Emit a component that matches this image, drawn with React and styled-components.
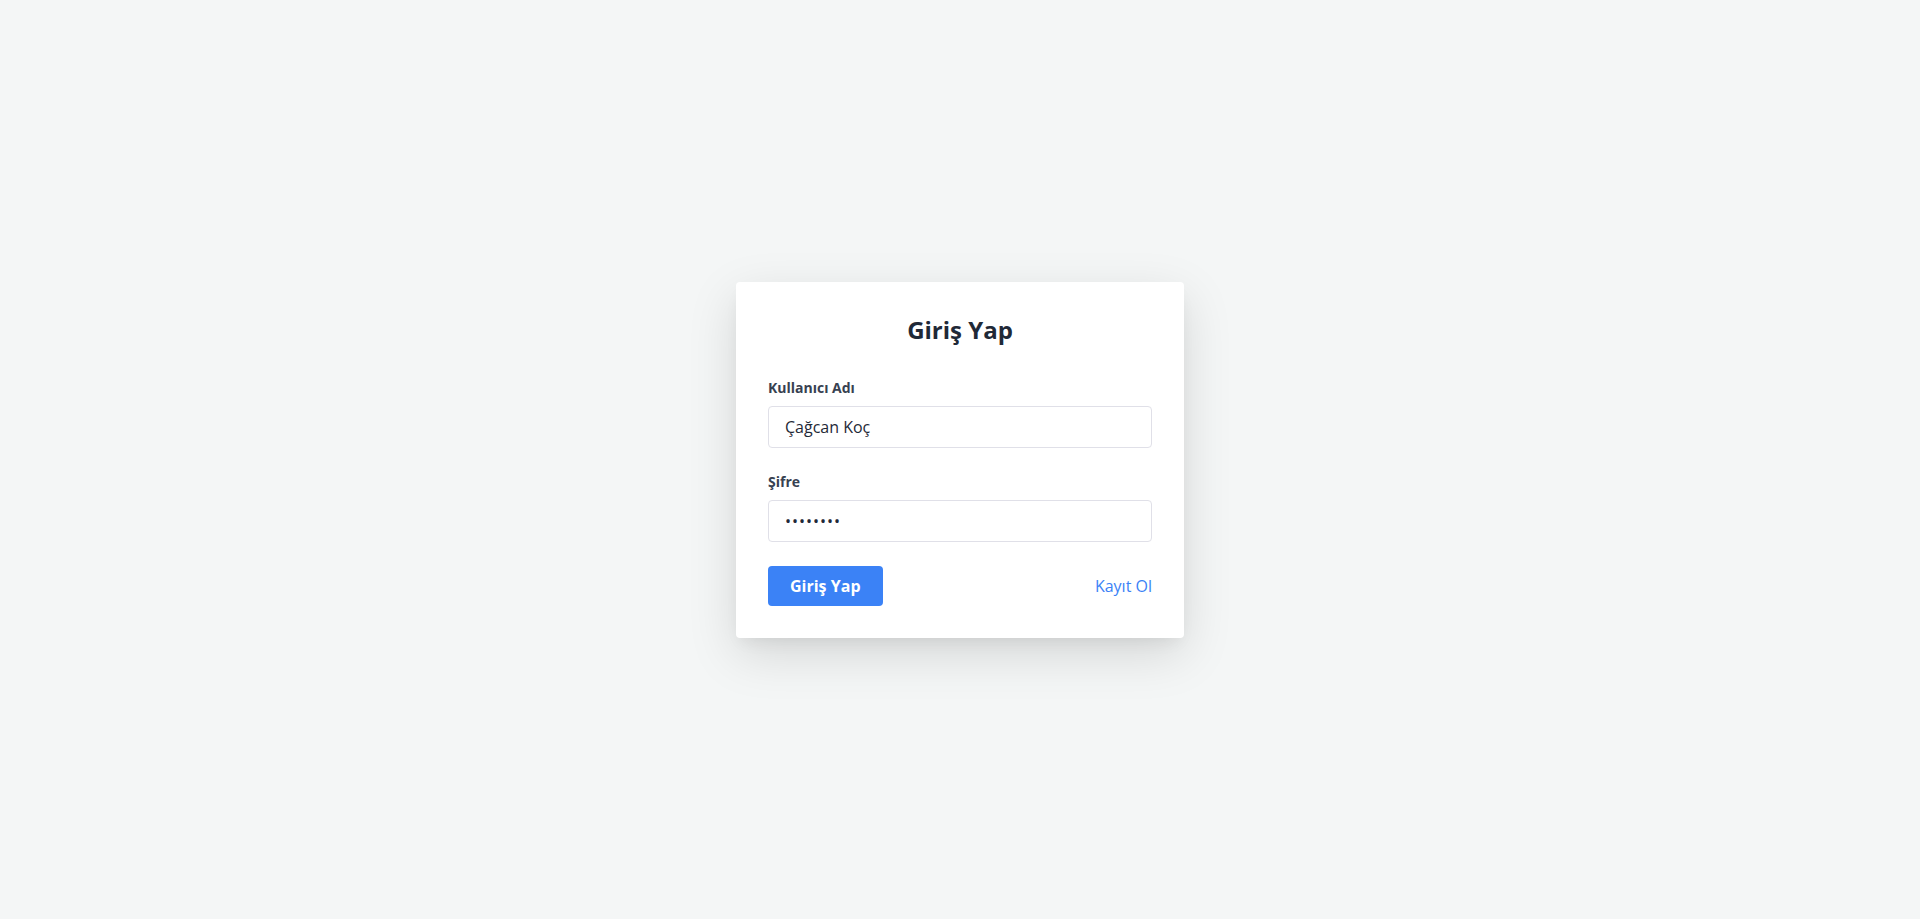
import { useState } from 'react';
import styled, { createGlobalStyle } from 'styled-components';

const GlobalStyle = createGlobalStyle`
  * {
    box-sizing: border-box;
  }
  body {
    margin: 0;
    background: #f4f6f6;
    font-family: "Open Sans", "Noto Sans", sans-serif;
  }
`;

const Screen = styled.div`
  min-height: 100vh;
  display: flex;
  align-items: center;
  justify-content: center;
`;

const Card = styled.form`
  width: 448px;
  padding: 32px;
  background: #ffffff;
  border-radius: 4px;
  box-shadow: 0 16px 50px rgba(0, 0, 0, 0.13), 0 8px 16px -6px rgba(0, 0, 0, 0.08);
`;

const Title = styled.h2`
  margin: 0 0 32px;
  font-size: 24px;
  line-height: 32px;
  font-weight: 700;
  text-align: center;
  color: #1f2937;
`;

const Field = styled.div`
  margin-bottom: 24px;
`;

const Label = styled.label`
  display: block;
  margin-bottom: 8px;
  font-size: 14px;
  line-height: 20px;
  font-weight: 700;
  color: #374151;
`;

const Input = styled.input`
  display: block;
  width: 100%;
  height: 42px;
  padding: 8px 16px;
  font-family: inherit;
  font-size: 16px;
  line-height: 24px;
  color: #1f2937;
  background: #fff;
  border: 1px solid #e0e0e8;
  border-radius: 4px;
  outline: none;
  letter-spacing: ${(p) => (p.type === 'password' ? '1px' : 'normal')};
`;

const Actions = styled.div`
  display: flex;
  align-items: center;
  justify-content: space-between;
`;

const Button = styled.button`
  height: 40px;
  padding: 0 22px;
  font-family: inherit;
  font-size: 16px;
  font-weight: 700;
  color: #fff;
  background: #3b82f6;
  border: none;
  border-radius: 4px;
  cursor: pointer;
`;

const LinkText = styled.a`
  font-size: 16px;
  color: #3b82f6;
  text-decoration: none;
  cursor: pointer;
`;

export default function App() {
  const [user, setUser] = useState('Çağcan Koç');
  const [pass, setPass] = useState('12345678');

  return (
    <>
      <GlobalStyle />
      <Screen>
        <Card onSubmit={(e) => e.preventDefault()}>
          <Title>Giriş Yap</Title>
          <Field>
            <Label htmlFor="username">Kullanıcı Adı</Label>
            <Input id="username" value={user} onChange={(e) => setUser(e.target.value)} />
          </Field>
          <Field>
            <Label htmlFor="password">Şifre</Label>
            <Input id="password" type="password" value={pass} onChange={(e) => setPass(e.target.value)} />
          </Field>
          <Actions>
            <Button type="submit">Giriş Yap</Button>
            <LinkText>Kayıt Ol</LinkText>
          </Actions>
        </Card>
      </Screen>
    </>
  );
}
